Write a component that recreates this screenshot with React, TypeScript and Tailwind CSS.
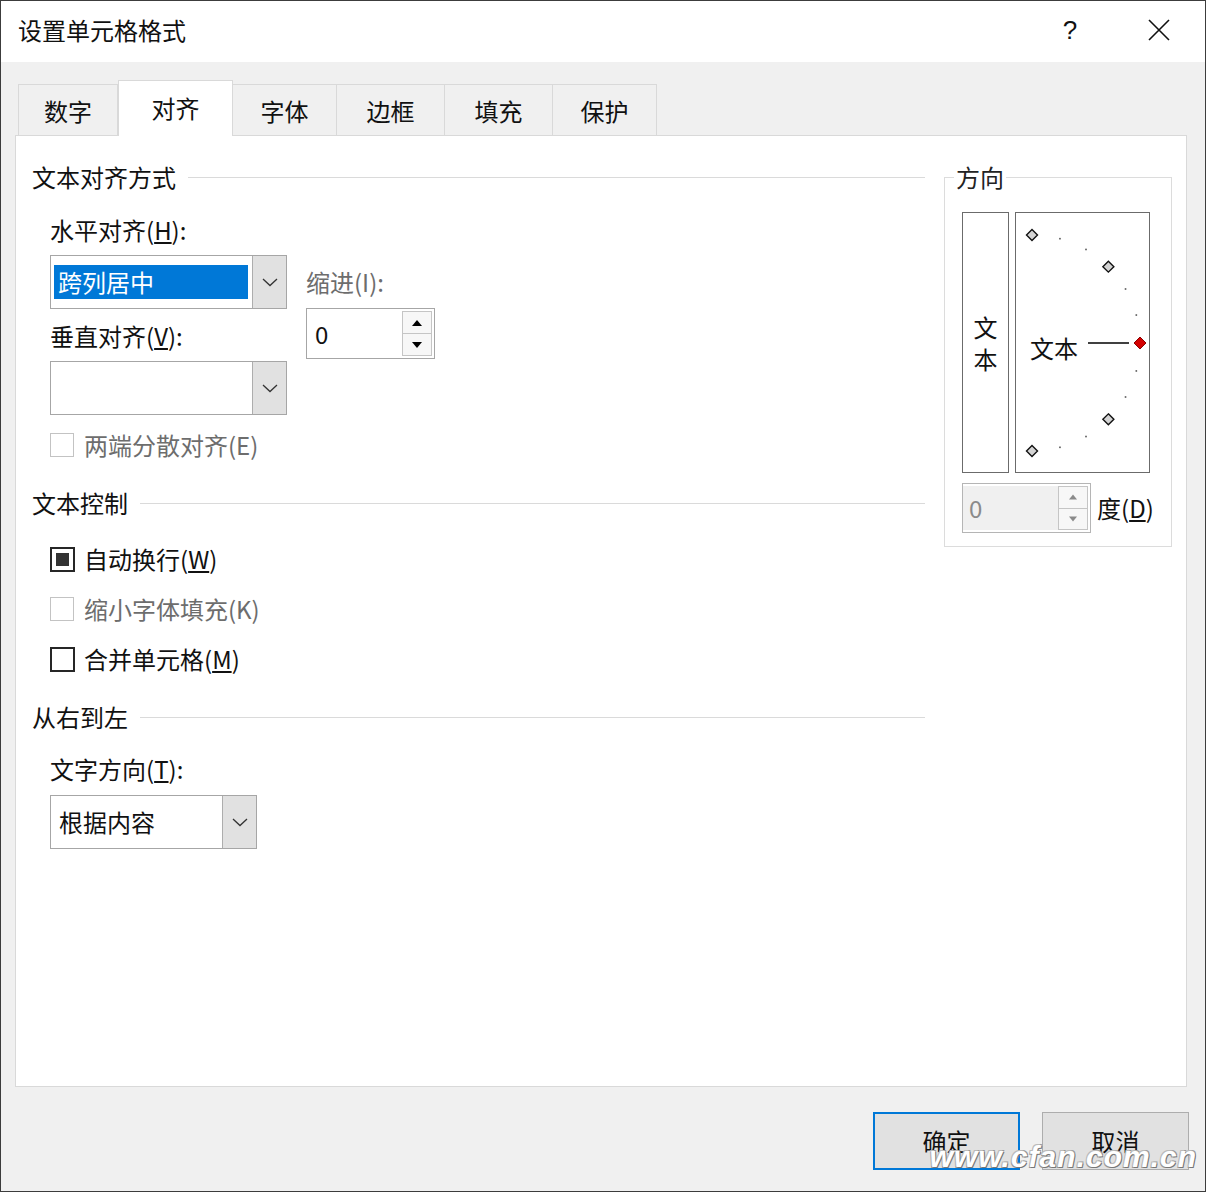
import React from 'react';

const font = { fontFamily: '"Noto Sans CJK SC", "Noto Sans", sans-serif' };

function Chevron() {
  return (
    <svg width="16" height="10" viewBox="0 0 16 10">
      <polyline points="1,2 8,8.5 15,2" fill="none" stroke="#333" strokeWidth="1.3" />
    </svg>
  );
}

function Combo({ width, value, selected }: { width: number; value?: string; selected?: boolean }) {
  return (
    <div className="flex h-[54px] border border-[#a6a6a6] bg-white" style={{ width }}>
      <div className="flex flex-1 items-center pl-[3px] pr-[4px]">
        {selected ? (
          <div className="flex h-[34px] w-full items-center bg-[#0078d7] pl-[4px] text-white">{value}</div>
        ) : (
          <span className="pl-[5px]">{value}</span>
        )}
      </div>
      <div className="flex w-[34px] items-center justify-center border-l border-[#adadad] bg-[#e1e1e1]">
        <Chevron />
      </div>
    </div>
  );
}

function SpinButtons({ disabled }: { disabled?: boolean }) {
  const c = disabled ? '#8a8a8a' : '#000';
  const w = disabled ? 8 : 10;
  return (
    <div className="flex w-[30px] flex-col">
      <div className="flex flex-1 items-center justify-center border border-[#c5c5c5] bg-[#f7f7f7]">
        <svg width={w} height="6" viewBox="0 0 10 6"><polygon points="0,6 5,0 10,6" fill={c} /></svg>
      </div>
      <div className="flex flex-1 items-center justify-center border border-t-0 border-[#c5c5c5] bg-[#f7f7f7]">
        <svg width={w} height="6" viewBox="0 0 10 6"><polygon points="0,0 10,0 5,6" fill={c} /></svg>
      </div>
    </div>
  );
}

function Check({ state }: { state: 'on' | 'off' | 'disabled' }) {
  if (state === 'disabled') return <div className="h-[24px] w-[24px] border border-[#c3c3c3] bg-white" />;
  return (
    <div className="flex h-[25px] w-[25px] items-center justify-center border-2 border-[#262626] bg-white">
      {state === 'on' && <div className="h-[13px] w-[13px] bg-[#333]" />}
    </div>
  );
}

function SectionHead({ title }: { title: string }) {
  return (
    <div className="flex h-[30px] items-center gap-[12px]">
      <span>{title}</span>
      <div className="h-px flex-1 bg-[#dadada]" />
    </div>
  );
}

function Dial() {
  const cx = 17;
  const cy = 131;
  const r = 108;
  const pt = (deg: number) => [cx + r * Math.cos((deg * Math.PI) / 180), cy - r * Math.sin((deg * Math.PI) / 180)];
  const diamond = (x: number, y: number, s: number) => `${x},${y - s} ${x + s},${y} ${x},${y + s} ${x - s},${y}`;
  return (
    <div className="relative h-[261px] w-[135px] border border-[#6b6b6b] bg-white">
      <svg className="absolute left-[-1px] top-[-1px]" width="135" height="261" viewBox="0 0 135 261">
        {[75, 60, 30, 15, -15, -30, -60, -75].map(a => {
          const [x, y] = pt(a);
          return <rect key={a} x={x - 0.8} y={y - 0.8} width="1.6" height="1.6" fill="#555" />;
        })}
        {[90, 45, -45, -90].map(a => {
          const [x, y] = pt(a);
          return <polygon key={a} points={diamond(x, y, 5.5)} fill="#d4d4d4" stroke="#111" strokeWidth="1.4" />;
        })}
        <line x1="73" y1={cy} x2="114" y2={cy} stroke="#000" strokeWidth="1.5" />
        <polygon points={diamond(125, cy, 6)} fill="#d40000" stroke="#8a0000" strokeWidth="1" />
      </svg>
      <span className="absolute left-[14px] top-[119px] leading-[32px]">文本</span>
    </div>
  );
}

const tabs = ['数字', '对齐', '字体', '边框', '填充', '保护'];
const tabWidths = [100, 115, 104, 108, 108, 104];

export default function App() {
  return (
    <div className="flex h-[1192px] w-[1206px] flex-col border border-[#3c3c3c] text-[24px] text-[#111]" style={font}>
      {/* Title bar */}
      <div className="flex h-[61px] items-center bg-white pb-[3px] pl-[17px]">
        <span className="flex-1">设置单元格格式</span>
        <span className="w-[24px] text-center text-[26px]" style={{ fontFamily: '"Liberation Sans", sans-serif' }}>?</span>
        <svg className="ml-[66px] mr-[35px]" width="22" height="22" viewBox="0 0 22 22">
          <path d="M1 1 L21 21 M21 1 L1 21" stroke="#111" strokeWidth="1.6" />
        </svg>
      </div>

      <div className="relative flex flex-1 flex-col bg-[#f0f0f0] px-[14px] pt-[18px]">
        {/* Tabs */}
        <div className="flex h-[55px] items-end pl-[3px]">
          {tabs.map((t, i) =>
            i === 1 ? (
              <div key={t} className="relative z-10 -mb-px flex h-[56px] items-center justify-center border border-b-0 border-[#d9d9d9] bg-white pb-[2px]" style={{ width: tabWidths[i] }}>{t}</div>
            ) : (
              <div key={t} className={`flex h-[51px] items-center justify-center border-t border-r border-[#d9d9d9] bg-[#f0f0f0] pt-[1px] ${i === 0 ? 'border-l' : ''}`} style={{ width: tabWidths[i] }}>{t}</div>
            )
          )}
        </div>

        {/* Panel */}
        <div className="mr-[4px] flex h-[952px] border border-[#d9d9d9] bg-white pl-[16px]">
          <div className="w-[893px] pt-[26px]">
            <SectionHead title="文本对齐方式" />
            <div className="ml-[18px] flex">
              <div className="flex flex-col">
                <div className="mt-[23px] flex h-[30px] items-center">水平对齐(<u>H</u>):</div>
                <div className="mt-[10px]"><Combo width={237} value="跨列居中" selected /></div>
                <div className="mt-[12px] flex h-[30px] items-center">垂直对齐(<u>V</u>):</div>
                <div className="mt-[10px]"><Combo width={237} /></div>
              </div>
              <div className="ml-[19px] flex flex-col pt-[75px]">
                <div className="flex h-[30px] items-center text-[#6d6d6d]">缩进(I):</div>
                <div className="mt-[11px] flex h-[51px] w-[129px] border border-[#a6a6a6] bg-white py-[2px] pr-[2px]">
                  <span className="flex flex-1 items-center pl-[8px]">0</span>
                  <SpinButtons />
                </div>
              </div>
            </div>
            <div className="ml-[18px] mt-[15px] flex h-[30px] items-center gap-[10px] text-[#6d6d6d]">
              <Check state="disabled" />
              <span>两端分散对齐(E)</span>
            </div>

            <div className="mt-[28px]"><SectionHead title="文本控制" /></div>
            <div className="ml-[18px] mt-[26px] flex flex-col gap-[20px]">
              <div className="flex h-[30px] items-center gap-[9px]">
                <Check state="on" />
                <span>自动换行(<u>W</u>)</span>
              </div>
              <div className="flex h-[30px] items-center gap-[10px] text-[#6d6d6d]">
                <Check state="disabled" />
                <span>缩小字体填充(K)</span>
              </div>
              <div className="flex h-[30px] items-center gap-[9px]">
                <Check state="off" />
                <span>合并单元格(<u>M</u>)</span>
              </div>
            </div>

            <div className="mt-[28px]"><SectionHead title="从右到左" /></div>
            <div className="ml-[18px] mt-[22px] flex h-[30px] items-center">文字方向(<u>T</u>):</div>
            <div className="ml-[18px] mt-[11px]"><Combo width={207} value="根据内容" /></div>
          </div>

          {/* Orientation group */}
          <div className="ml-[19px] pt-[26px]">
            <fieldset className="w-[227px] border border-[#dcdcdc] px-[17px] pb-[13px]">
              <legend className="-ml-[8px] px-[2px] leading-[30px] text-[#222]">方向</legend>
              <div className="mt-[20px] flex gap-[6px]">
                <div className="flex h-[261px] w-[47px] flex-col items-center justify-center border border-[#6b6b6b] bg-white leading-[32px]">
                  <span>文</span>
                  <span>本</span>
                </div>
                <Dial />
              </div>
              <div className="mt-[10px] flex items-center whitespace-nowrap">
                <div className="flex h-[50px] w-[129px] shrink-0 border border-[#b5b5b5] bg-white py-[2px] pr-[2px]">
                  <span className="flex flex-1 items-center bg-[#f0f0f0] pl-[6px] text-[#8a8a8a]">0</span>
                  <SpinButtons disabled />
                </div>
                <span className="ml-[6px]">度(<u>D</u>)</span>
              </div>
            </fieldset>
          </div>
        </div>

        {/* Buttons */}
        <div className="flex justify-end gap-[22px] pr-[2px] pt-[25px]">
          <div className="flex h-[58px] w-[147px] items-center justify-center border-2 border-[#0078d7] bg-[#e1e1e1]">确定</div>
          <div className="flex h-[58px] w-[147px] items-center justify-center border border-[#adadad] bg-[#e1e1e1]">取消</div>
        </div>

        <div
          className="pointer-events-none absolute bottom-[12px] right-[8px] text-[30px] font-bold italic tracking-[1px] text-white [text-shadow:1px_1px_0_#777,-1px_-1px_0_#bbb,1px_-1px_0_#999,-1px_1px_0_#999]"
          style={{ fontFamily: '"Liberation Sans", sans-serif' }}
        >
          www.cfan.com.cn
        </div>
      </div>
    </div>
  );
}
